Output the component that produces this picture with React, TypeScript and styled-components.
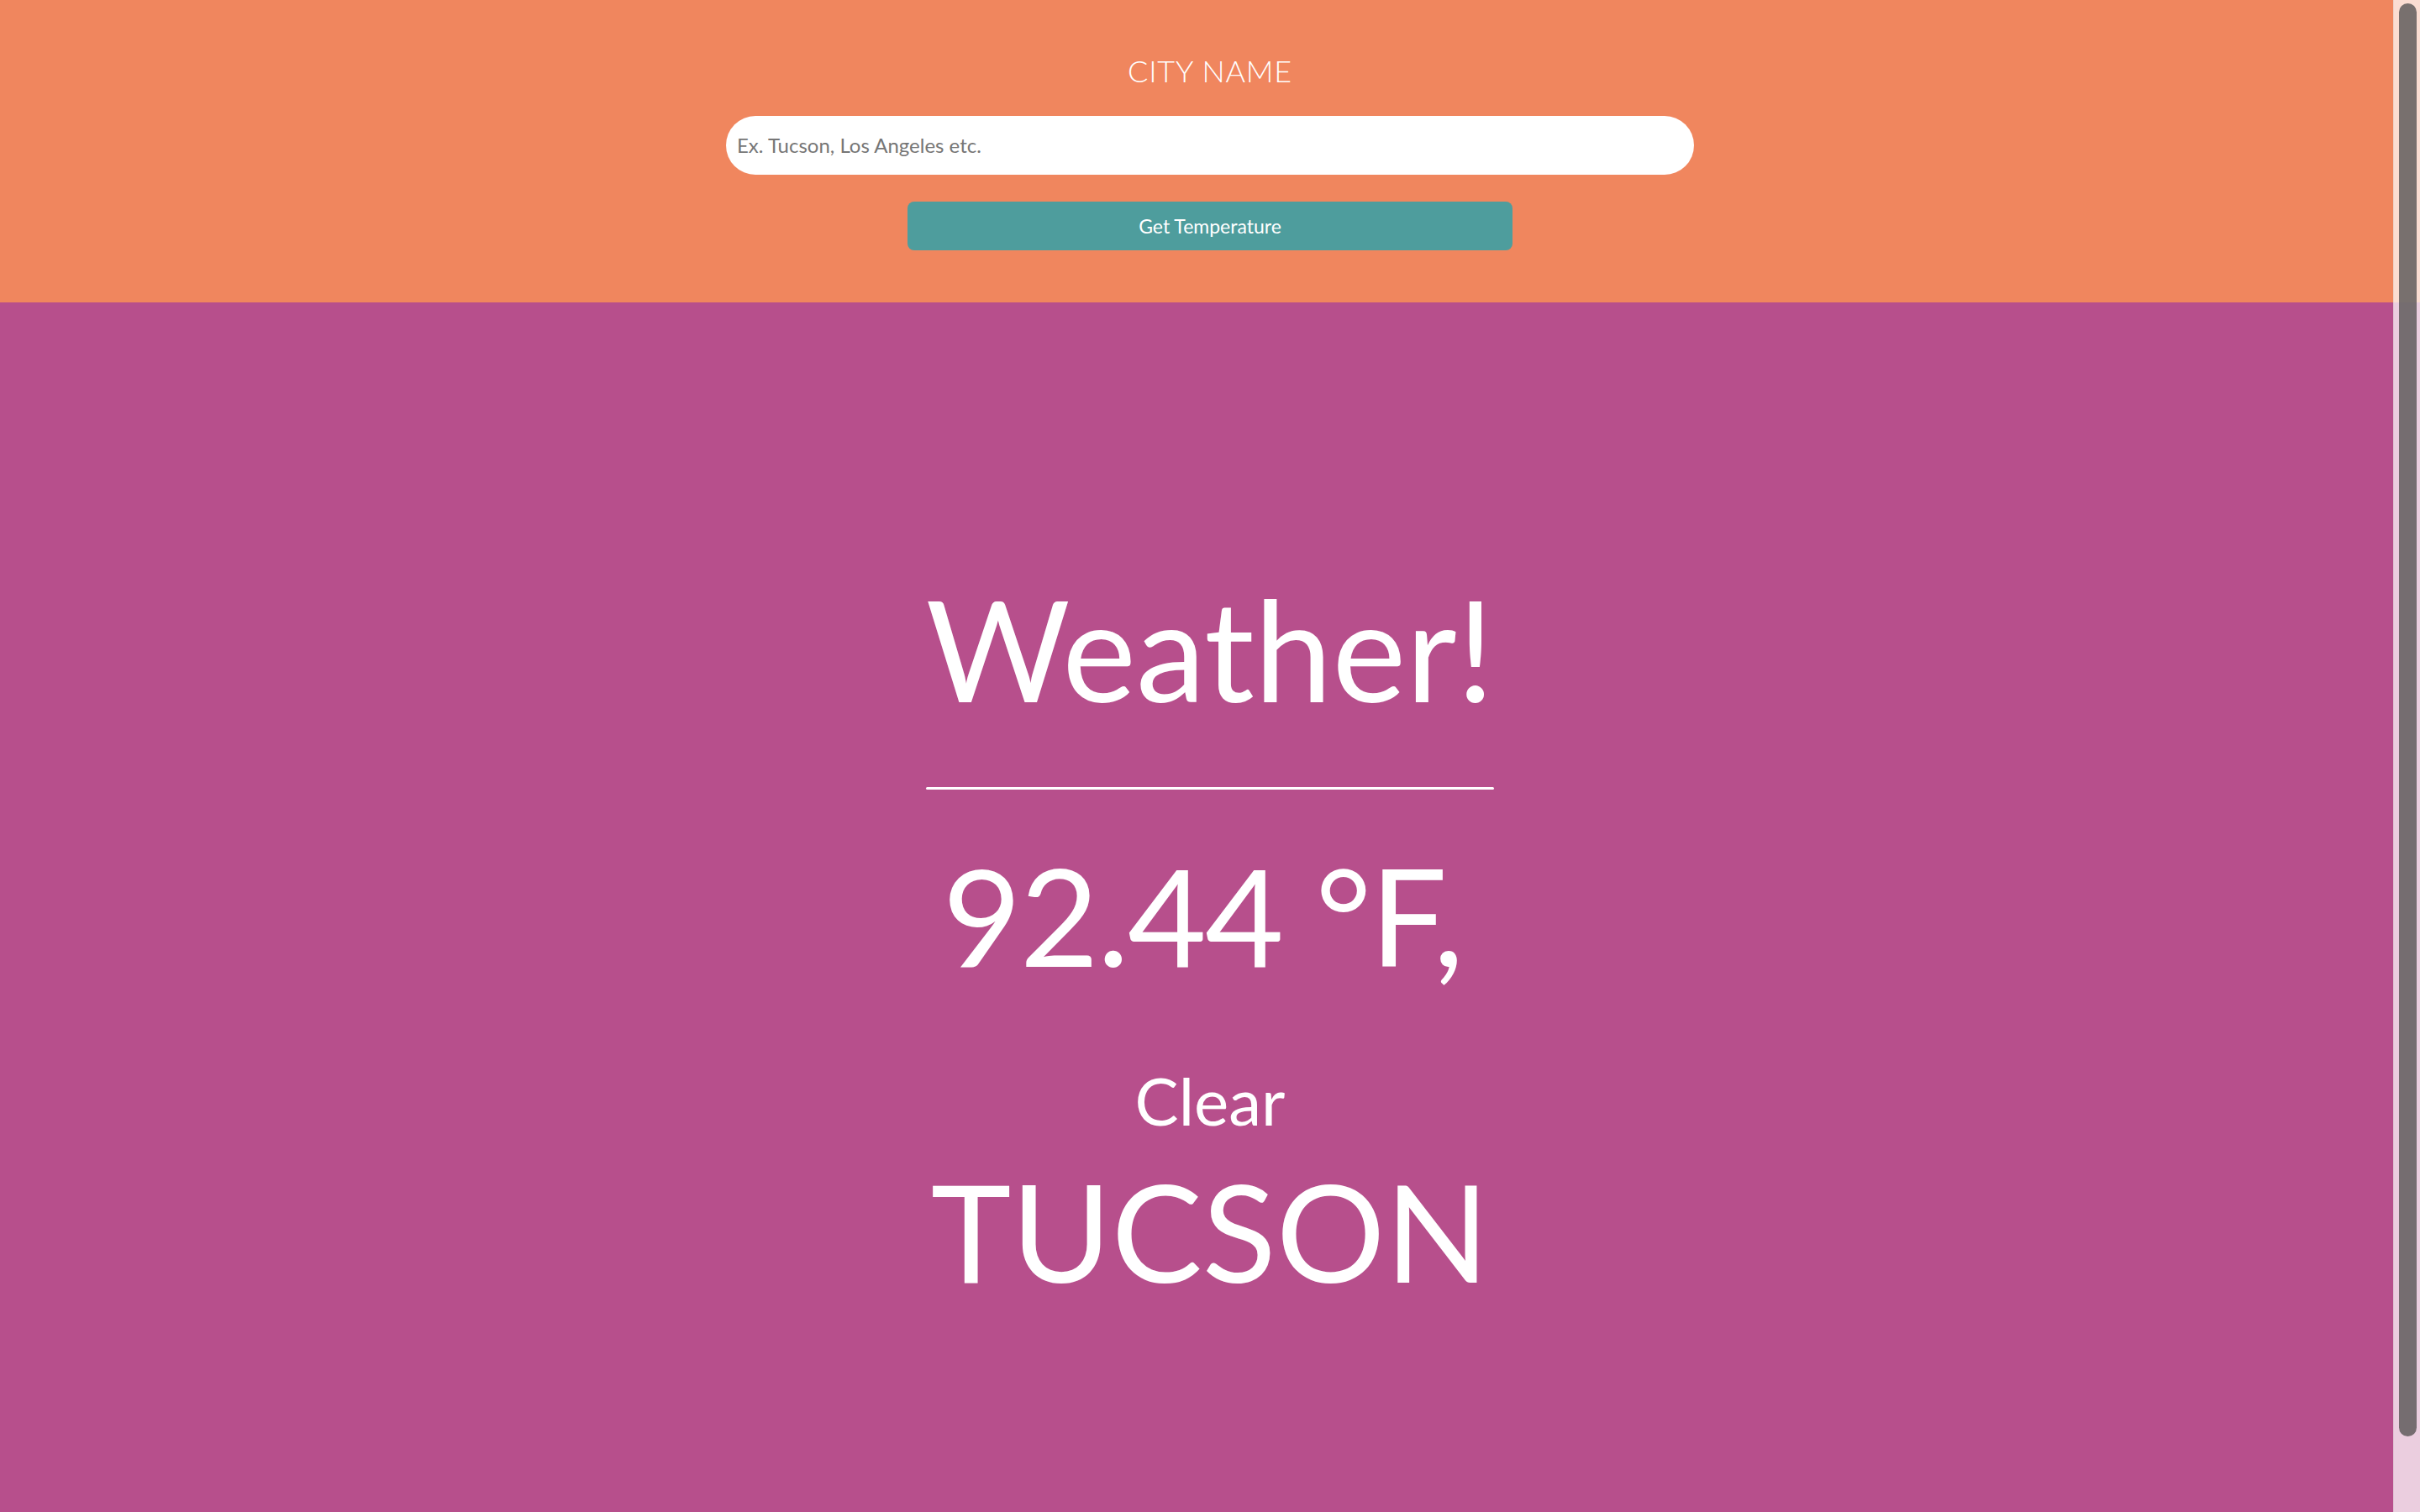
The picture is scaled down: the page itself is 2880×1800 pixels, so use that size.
import React from "react";
import styled, { createGlobalStyle } from "styled-components";

const Global = createGlobalStyle`
  html, body {
    margin: 0;
    padding: 0;
    height: 100%;
    overflow: hidden;
  }
  body {
    background: #b74f8c;
    font-family: Lato, "Open Sans", "Liberation Sans", sans-serif;
    color: #ffffff;
  }
  input::placeholder {
    color: #767676;
  }
`;

const Page = styled.div`
  display: flex;
  flex-direction: column;
  min-height: 100vh;
`;

const Header = styled.header`
  height: 360px;
  box-sizing: border-box;
  background: #f0865e;
  display: flex;
  flex-direction: column;
  align-items: center;
  padding-top: 66px;
`;

const Label = styled.label`
  font-size: 36px;
  line-height: 36px;
  font-weight: 300;
  letter-spacing: 0.8px;
  color: #ffffff;
`;

const CityInput = styled.input`
  margin-top: 36px;
  width: 1152px;
  height: 70px;
  box-sizing: border-box;
  border: none;
  outline: none;
  border-radius: 35px;
  background: #ffffff;
  padding: 0 13px 2px;
  font-family: inherit;
  font-size: 24px;
  color: #555;
`;

const Button = styled.button`
  margin-top: 32px;
  width: 720px;
  height: 58px;
  border: none;
  border-radius: 8px;
  background: #4e9d9d;
  color: #ffffff;
  font-family: inherit;
  font-size: 23px;
  cursor: pointer;
`;

const Main = styled.main`
  flex: 1;
  background: #b74f8c;
  display: flex;
  flex-direction: column;
  align-items: center;
  padding-top: 329px;
`;

const Title = styled.h1`
  margin: 0;
  font-size: 166px;
  line-height: 166px;
  font-weight: 400;
  letter-spacing: 0;
`;

const Rule = styled.hr`
  margin: 82px 0 0;
  width: 676px;
  height: 3px;
  border: none;
  border-radius: 2px;
  background: #ffffff;
`;

const Big = styled.div<{ $gap: number; $shift?: number }>`
  margin-top: ${(p) => p.$gap}px;
  padding-right: ${(p) => p.$shift ?? 0}px;
  font-size: 162px;
  line-height: 162px;
  font-weight: 400;
  letter-spacing: ${(p) => (p.$shift ? "-2px" : "0")};
`;

const Condition = styled.div`
  margin-top: 101px;
  font-size: 78px;
  line-height: 78px;
  font-weight: 400;
`;

const Track = styled.div`
  position: fixed;
  top: 0;
  right: 0;
  width: 32px;
  height: 100vh;
  box-sizing: border-box;
  background: rgba(255, 255, 255, 0.72);
  border-left: 1px solid rgba(0, 0, 0, 0.05);
  padding: 4px 4px 90px 6px;
  display: flex;
`;

const Thumb = styled.div`
  flex: 1;
  border-radius: 11px;
  background: rgba(90, 88, 88, 0.82);
`;

export default function App() {
  return (
    <>
      <Global />
      <Page>
        <Header>
          <Label htmlFor="city">CITY NAME</Label>
          <CityInput id="city" placeholder="Ex. Tucson, Los Angeles etc." />
          <Button>Get Temperature</Button>
        </Header>
        <Main>
          <Title>Weather!</Title>
          <Rule />
          <Big $gap={68} $shift={18}>92.44 °F,</Big>
          <Condition>Clear</Condition>
          <Big $gap={35}>TUCSON</Big>
        </Main>
      </Page>
      <Track>
        <Thumb />
      </Track>
    </>
  );
}
